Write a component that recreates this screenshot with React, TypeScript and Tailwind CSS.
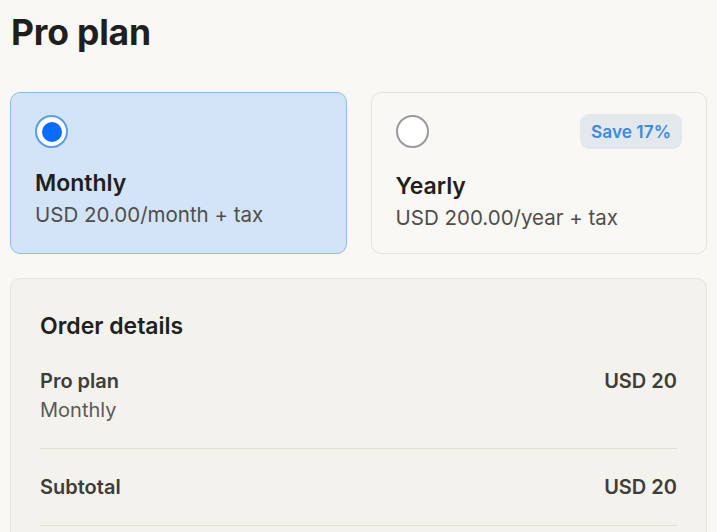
import React from "react";

const font = { fontFamily: "Inter, 'Noto Sans', sans-serif" };

function Radio({ checked }: { checked: boolean }) {
  if (checked) {
    return (
      <div className="flex h-[33px] w-[33px] items-center justify-center rounded-full border-2 border-[#5a9bf0] bg-white">
        <div className="h-[20px] w-[20px] rounded-full bg-[#0a6cff]" />
      </div>
    );
  }
  return <div className="h-[33px] w-[33px] rounded-full border-2 border-[#9a9a98] bg-white" />;
}

export default function App() {
  return (
    <div className="min-h-screen bg-[#f9f8f5] px-[10px] pt-[12px] text-[#1f1f1e]" style={font}>
      <h1 className="text-[35.5px] font-bold leading-[42px] tracking-[-0.2px] pl-[1px]">Pro plan</h1>

      <div className="mt-[38px] grid grid-cols-2 gap-6">
        <div className="rounded-[10px] border border-[#8fbcf0] bg-[#d3e4f8] px-6 pt-[21px] pb-[22px]">
          <div className="flex h-[35px] items-center">
            <Radio checked />
          </div>
          <div className="mt-[20px] text-[23px] font-semibold leading-[28px]">Monthly</div>
          <div className="mt-[5px] text-[20.5px] leading-[26px] text-[#4f4e4a]">USD 20.00/month + tax</div>
        </div>
        <div className="rounded-[10px] border border-[#e6e4de] bg-[#f9f8f5] px-6 pt-[21px] pb-[22px]">
          <div className="flex h-[35px] items-center justify-between">
            <Radio checked={false} />
            <div className="flex h-[35px] items-center rounded-[9px] bg-[#e3e8ec] px-[11px] text-[17.3px] font-semibold text-[#3b8be0]">
              Save 17%
            </div>
          </div>
          <div className="mt-[23px] text-[23px] font-semibold leading-[28px]">Yearly</div>
          <div className="mt-[5px] text-[20.5px] leading-[26px] text-[#4f4e4a]">USD 200.00/year + tax</div>
        </div>
      </div>

      <div className="mt-6 rounded-[10px] border border-[#e6e4dd] bg-[#f3f2ec] px-[29px] pt-[32px] pb-8">
        <div className="text-[23px] font-semibold leading-[30px]">Order details</div>
        <div className="flex justify-between border-b border-[#e2e0d9] pt-[26px] pb-[23px] text-[20px] leading-[29px]">
          <div>
            <div className="font-semibold text-[#3d3d3a]">Pro plan</div>
            <div className="text-[#5b5a56]">Monthly</div>
          </div>
          <div className="font-semibold text-[#3d3d3a]">USD 20</div>
        </div>
        <div className="flex justify-between border-b border-[#e2e0d9] pt-[24px] pb-[23px] text-[20px] leading-[29px]">
          <div className="font-semibold text-[#3d3d3a]">Subtotal</div>
          <div className="font-semibold text-[#3d3d3a]">USD 20</div>
        </div>
        <div className="h-20" />
      </div>
    </div>
  );
}
